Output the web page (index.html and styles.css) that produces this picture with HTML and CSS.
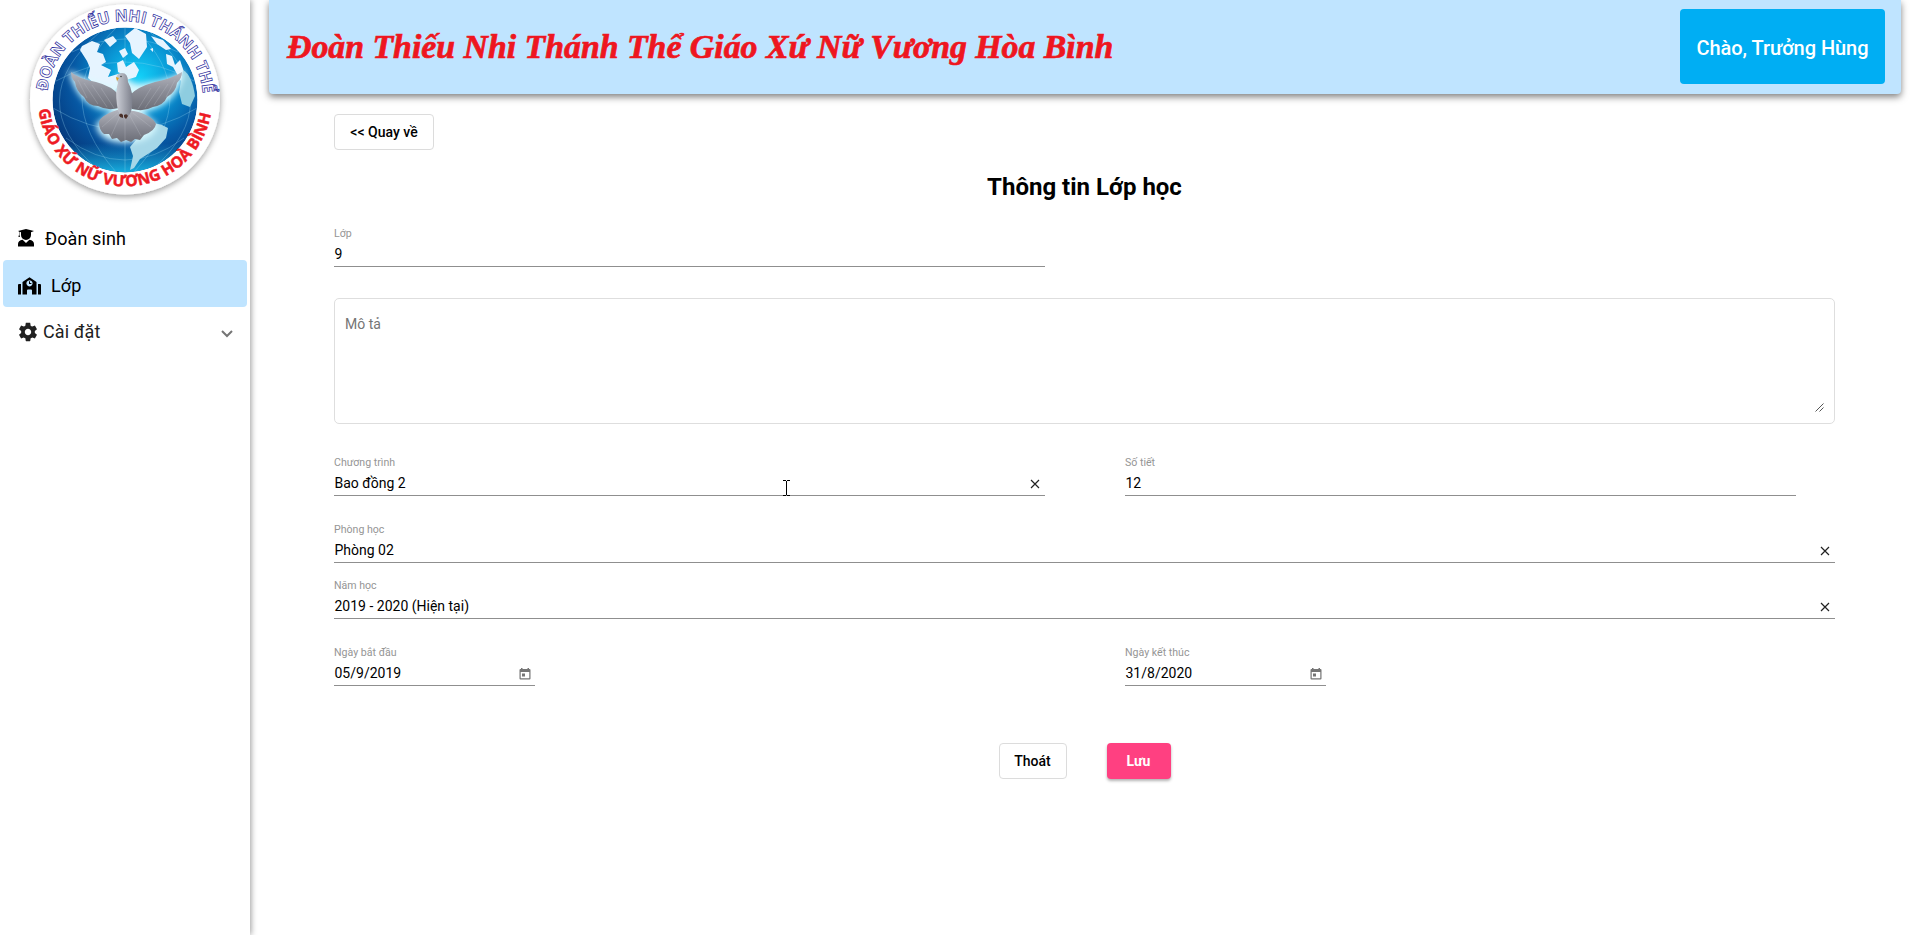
FILE: index.html
```html
<!DOCTYPE html>
<html lang="vi">
<head>
<meta charset="utf-8">
<title>Thông tin Lớp học</title>
<link rel="stylesheet" href="styles.css">
</head>
<body>
<div class="app">
  <aside class="sidebar">
    <svg class="logo" viewBox="0 0 250 215" width="250" height="215">
      <defs>
        <radialGradient id="sea" cx="0.6" cy="0.34" r="0.66">
          <stop offset="0" stop-color="#12d0f8"/>
          <stop offset="0.35" stop-color="#0a98d6"/>
          <stop offset="0.7" stop-color="#0658a4"/>
          <stop offset="1" stop-color="#053c80"/>
        </radialGradient>
        <linearGradient id="rim" x1="0" y1="0" x2="0" y2="1">
          <stop offset="0.8" stop-color="#1bb0e0" stop-opacity="0"/>
          <stop offset="1" stop-color="#18b4e4" stop-opacity="0.95"/>
        </linearGradient>
        <linearGradient id="feather" x1="0" y1="0" x2="0" y2="1">
          <stop offset="0" stop-color="#b4b6bf"/>
          <stop offset="0.5" stop-color="#8b8d97"/>
          <stop offset="1" stop-color="#6c6e77"/>
        </linearGradient>
        <linearGradient id="breast" x1="0" y1="0" x2="1" y2="0">
          <stop offset="0" stop-color="#cdd0d8"/>
          <stop offset="1" stop-color="#7c7f8b"/>
        </linearGradient>
        <filter id="glow" x="-30%" y="-30%" width="160%" height="160%"><feGaussianBlur stdDeviation="3"/></filter>
        <filter id="drop" x="-20%" y="-20%" width="140%" height="140%"><feDropShadow dx="0" dy="2" stdDeviation="3" flood-opacity="0.4"/></filter>
        <clipPath id="ball"><circle cx="125" cy="100" r="72.5"/></clipPath>
        <path id="arcTop" d="M47.4 91.3A78 78 0 0 1 202.6 91.3"/>
        <path id="arcBottom" d="M38.6 109.6A87 87 0 0 0 211.4 109.6"/>
      </defs>
      <circle cx="125" cy="99.500" r="95" fill="#fff" filter="url(#drop)"/>
      <g clip-path="url(#ball)">
        <circle cx="125" cy="100" r="72.500" fill="url(#sea)"/>
        <circle cx="125" cy="100" r="72.500" fill="url(#rim)"/>
        <g fill="none" stroke="#9fdcf5" stroke-width="0.600" opacity="0.5">
          <path d="M54 82Q125 42 196 82M53 108Q125 152 197 108M66 138Q125 182 184 138M72 52Q125 26 178 52M125 28V172M116 28Q48 95 116 172M134 28Q206 95 134 172M100 32Q20 100 98 170M150 32Q230 100 152 170"/>
        </g>
        <path fill="#e6f4ff" d="M82 46L92 41 100 44 97 52 103 54 106 62 101 65 111 70 108 77 118 74 122 83 113 92 98 87 88 78 90 68 87 61 80 50zM104 40l9-4 4 5-7 6zM119 51l6-3 3 6-5 4zM125 36l10-8 11 6 1 13-8 12-7-6-2-10zM117 63l6-3 3 7 8-5 5 8-3 7-10 3-4-6-4-2z"/>
        <path fill="#e6f4ff" d="M151 36l12 4 8 9-5 1-9-6zM166 54l6 2 3 9 5-5 4 12 5 12-8-3-8-14-6-3zM150 49l3-1v4z"/>
        <path fill="#8ecde0" d="M183 70q9 5 12 26l-5 11-8-3-3-12z"/>
        <path fill="#a6d7e8" d="M146 129l8-6 8 2 6 3-2 10-9 10-9 6-8 5-6 9-4 2 3-14-3-9 6-7 4-5z"/>
      </g>
      <path filter="url(#glow)" fill="#d9f9ff" d="M68 70Q90 82 117 88Q118 72 124 72Q130 88 150 82Q170 80 185 70Q178 106 142 112L158 125Q152 142 125 143Q98 142 96 124L114 110Q80 112 68 70z"/>
      <path fill="url(#feather)" d="M71 72Q79 79 96 82Q112 86 120 96L119 108Q107 111 98 106Q88 106 84 97Q76 91 75 82Q71 78 71 72z"/>
      <path fill="url(#feather)" d="M182 72Q171 79 155 82Q137 87 130 95L132 109Q144 112 153 107Q164 105 167 97Q176 92 177 83Q182 78 182 72z"/>
      <path fill="url(#feather)" d="M117 110Q99 116 99 123Q99 130 104 134L109 134 112 139 117 138 121 142 126 140 131 142 135 139 140 140 144 135Q155 131 156 124Q152 115 134 111z"/>
      <path fill="none" stroke="#c9ccd4" stroke-width="0.500" opacity="0.5" d="M78 80l9 18M84 83l14 21M92 85l15 22M101 88l13 20M175 80l-9 17M168 84l-14 21M160 86l-15 22M151 88l-13 21M121 114l-10 22M125 114v26M129 114l12 22M118 113l-16 14M133 113l18 14"/>
      <path fill="url(#breast)" d="M116 78Q117 73 122 73Q128 73 128 82Q134 92 132 108Q130 117 125 118Q118 116 117 105Q115 91 118 83z"/>
      <path fill="#e0a11d" d="M116 77l3 1-2 3z"/>
      <circle cx="121" cy="76.500" r="0.700" fill="#222"/>
      <path fill="#4a302a" d="M119 115q2-3 4 0l0 3-3-1zM124 115q3-2 4 1l-2 3-2-2z"/>
      <text class="logo-top"><textPath href="#arcTop" textLength="231" lengthAdjust="spacing">ĐOÀN THIẾU NHI THÁNH THỂ</textPath></text>
      <text class="logo-bottom"><textPath href="#arcBottom" textLength="248" lengthAdjust="spacing">GIÁO XỨ NỮ VƯƠNG HOÀ BÌNH</textPath></text>
    </svg>
    <nav class="menu">
      <a class="item item-student">
        <svg width="16" height="18" viewBox="0 0 16 18"><path d="M0 2L8 0l8 2-3 1.300v2.700a5 5 0 0 1-10 0V3.300l-1.600-.5v3L2 8H.4L1 5.800V2.500zM0 17.500V15q0-3.500 4.600-4.200L8 14l3.400-3.200Q16 11.500 16 15v2.500z"/></svg>
        <span>Đoàn sinh</span>
      </a>
      <a class="item item-class">
        <svg width="23" height="18" viewBox="0 0 23 18"><path fill-rule="evenodd" d="M0 8q0-1 1-1h2v10.500H0zM20 7h2q1 0 1 1v9.500h-3zM4.500 5L11.500.3 18.500 5v12.500H14V13.500q0-1-1-1h-3q-1 0-1 1v4H4.500zM11.500 3.200a3.100 3.100 0 1 0 .01 0zM11 4.300h1v1.800h1.400v.9H11z"/></svg>
        <span>Lớp</span>
      </a>
      <a class="item item-settings">
        <svg width="22" height="22" viewBox="0 0 24 24"><path d="M19.430 12.980c.04-.32.070-.64.070-.98s-.03-.66-.07-.98l2.110-1.650c.19-.15.240-.42.120-.64l-2-3.460c-.12-.22-.39-.3-.61-.22l-2.490 1c-.52-.4-1.080-.73-1.690-.98l-.38-2.650C14.460 2.180 14.250 2 14 2h-4c-.25 0-.46.180-.49.420l-.38 2.650c-.61.250-1.170.590-1.690.980l-2.490-1c-.23-.09-.49 0-.61.220l-2 3.460c-.13.220-.07.490.120.640l2.110 1.650c-.04.320-.07.650-.07.980s.03.660.070.980l-2.110 1.650c-.19.150-.24.420-.12.640l2 3.460c.12.220.39.300.61.220l2.490-1c.52.400 1.080.730 1.690.980l.38 2.650c.03.240.240.420.490.420h4c.25 0 .46-.18.490-.42l.38-2.650c.61-.25 1.170-.59 1.690-.98l2.490 1c.23.090.490 0 .61-.22l2-3.460c.12-.22.070-.49-.12-.64l-2.110-1.650zM12 15.500c-1.930 0-3.500-1.570-3.500-3.500s1.570-3.500 3.500-3.500 3.500 1.570 3.500 3.500-1.570 3.500-3.500 3.500z"/></svg>
        <span>Cài đặt</span>
        <svg class="chevron" width="12" height="8" viewBox="0 0 12 8"><path d="M1 1l5 5 5-5"/></svg>
      </a>
    </nav>
  </aside>
  <div class="main">
    <header class="topbar">
      <h1>Đoàn Thiếu Nhi Thánh Thể Giáo Xứ Nữ Vương Hòa Bình</h1>
      <div class="user">Chào, Trưởng Hùng</div>
    </header>
    <main class="form">
      <button class="btn back">&lt;&lt; Quay về</button>
      <h2>Thông tin Lớp học</h2>
      <div class="field w-left"><label>Lớp</label><div class="value">9</div></div>
      <div class="area">
        <span>Mô tả</span>
        <svg class="grip" width="9" height="9" viewBox="0 0 9 9"><path d="M.5 8.500l8-8M4.500 8.500l4-4"/></svg>
      </div>
      <div class="row row-program">
        <div class="field w-left"><label>Chương trình</label><div class="value">Bao đồng 2<svg class="clear" width="10" height="10" viewBox="0 0 10 10"><path d="M1 1l8 8M9 1l-8 8"/></svg></div></div>
        <div class="field w-lessons"><label>Số tiết</label><div class="value">12</div></div>
      </div>
      <div class="field room"><label>Phòng học</label><div class="value">Phòng 02<svg class="clear" width="10" height="10" viewBox="0 0 10 10"><path d="M1 1l8 8M9 1l-8 8"/></svg></div></div>
      <div class="field year"><label>Năm học</label><div class="value">2019 - 2020 (Hiện tại)<svg class="clear" width="10" height="10" viewBox="0 0 10 10"><path d="M1 1l8 8M9 1l-8 8"/></svg></div></div>
      <div class="row row-dates">
        <div class="w-left"><div class="field w-date"><label>Ngày bắt đầu</label><div class="value">05/9/2019<svg class="cal" width="12" height="12" viewBox="0 0 12 12"><path fill-rule="evenodd" d="M2 0h1.500v1h5V0H10v1h.5q1 0 1 1v8.500q0 1-1 1h-9q-1 0-1-1V2q0-1 1-1H2zM1.700 4v6.300h8.600V4zM3 5.500h3v3H3z"/></svg></div></div></div>
        <div class="field w-date"><label>Ngày kết thúc</label><div class="value">31/8/2020<svg class="cal" width="12" height="12" viewBox="0 0 12 12"><path fill-rule="evenodd" d="M2 0h1.500v1h5V0H10v1h.5q1 0 1 1v8.500q0 1-1 1h-9q-1 0-1-1V2q0-1 1-1H2zM1.700 4v6.300h8.600V4zM3 5.500h3v3H3z"/></svg></div></div>
      </div>
      <div class="actions">
        <button class="btn cancel">Thoát</button>
        <button class="btn save">Lưu</button>
      </div>
    </main>
  </div>
</div>
<svg class="cursor" width="7" height="16" viewBox="0 0 7 16"><path d="M0 .5h3M4 .5h3M3.500 1v14M0 15.500h3M4 15.500h3"/></svg>
</body>
</html>
```
FILE: styles.css
```css
* { box-sizing: border-box; }
body { margin: 0; font-family: Roboto, "Liberation Sans", sans-serif; color: #000; background: #fff; }
.app { display: flex; height: 935px; overflow: hidden; }

.sidebar { width: 250px; flex: none; box-shadow: 1px 0 6px rgba(0, 0, 0, .4); }
.logo { display: block; }
.logo-top { font: bold 16px "Open Sans", sans-serif; fill: #fff; stroke: #2a2a9c; stroke-width: .7px; }
.logo-bottom { font: bold 15.500px "Open Sans", sans-serif; fill: #ee1b24; stroke: #ee1b24; stroke-width: .5px; }
.menu { padding: 0 3px; }
.item { display: flex; align-items: center; height: 47px; padding-left: 15px; border-radius: 4px; font-size: 18px; letter-spacing: .1px; }
.item-student { height: 45px; gap: 11px; padding-top: 2px; }
.item-student svg { margin-top: -2px; }
.item-class { background: #bfe4ff; gap: 10px; padding-top: 4px; }
.item-settings { padding: 2px 0 0 14px; gap: 4px; color: #212121; fill: #212121; }
.item-settings svg { flex: none; }
.item .chevron { margin: 5px 14px 0 auto; fill: none; stroke: #757575; stroke-width: 2; }

.main { flex: 1; padding: 0 19px; }
.topbar { display: flex; align-items: flex-start; justify-content: space-between; height: 94px; padding: 9px 16px 0 18px; background: #bfe4ff; border-radius: 0 0 4px 4px; box-shadow: 0 3px 7px rgba(0, 0, 0, .5); }
.topbar h1 { margin: 0; font: italic bold 33.800px/76px "Liberation Serif", serif; color: #ee1620; -webkit-text-stroke: .7px #ee1620; white-space: nowrap; }
.user { height: 75px; width: 205px; line-height: 78px; text-align: center; background: #00aef3; border-radius: 4px; color: #fff; font-size: 20px; font-weight: 500; letter-spacing: -.05px; }

.form { display: flex; flex-direction: column; padding: 20px 66px 0 65px; }
.btn { height: 36px; padding: 0; border: 1px solid #dcdcdc; border-radius: 4px; background: #fff; font: 500 14px Roboto, sans-serif; color: #000; }
.back { width: 100px; }
h2 { margin: 21px 0 0; font-size: 24px; line-height: 32px; font-weight: 700; text-align: center; }
.field { height: 42px; border-bottom: 1px solid #8f8f8f; }
.field label { display: block; height: 16px; font-size: 10.600px; line-height: 17px; color: #959595; }
.value { display: flex; align-items: center; justify-content: space-between; height: 25px; padding: 1px 0 0 .5px; font-size: 14px; }
h2 + .field { margin-top: 22px; }
.w-left { width: 711px; }
.w-lessons { width: 671px; }
.w-date { width: 201px; }
.clear { margin: 2px 5px 0 0; fill: none; stroke: #222; stroke-width: 1.2; }
.cal { margin: 2px 4px 0 0; fill: #757575; }
.area { display: flex; justify-content: space-between; margin-top: 31px; height: 126px; padding: 17px 10px 11px; border: 1px solid #dedede; border-radius: 5px; font-size: 14px; line-height: 16px; color: #757575; }
.grip { align-self: flex-end; fill: none; stroke: #555; stroke-width: 1; }
.row { display: flex; gap: 80px; }
.row-program { margin-top: 30px; }
.room { margin-top: 25px; }
.year { margin-top: 14px; }
.row-dates { margin-top: 25px; }
.actions { display: flex; justify-content: center; gap: 40px; margin-top: 57px; }
.cancel { width: 68px; }
.save { width: 64px; border: 0; background: #ff4081; color: #fff; font-weight: 700; box-shadow: 0 2px 3px rgba(0, 0, 0, .3); }
.cursor { position: absolute; left: 783px; top: 480px; fill: none; stroke: #000; }
```
